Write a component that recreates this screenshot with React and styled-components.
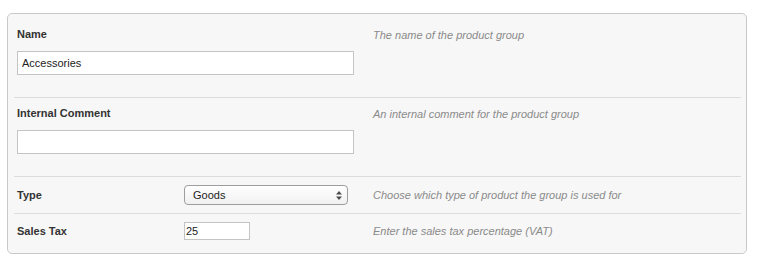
import styled, { createGlobalStyle } from "styled-components";

const GlobalStyle = createGlobalStyle`
  body {
    margin: 0;
    background: #fff;
    font-family: "Liberation Sans", Arial, Helvetica, sans-serif;
  }
`;

const fields = [
  {
    label: "Name",
    hint: "The name of the product group",
    stacked: true,
    value: "Accessories",
  },
  {
    label: "Internal Comment",
    hint: "An internal comment for the product group",
    stacked: true,
    value: "",
  },
  {
    label: "Type",
    hint: "Choose which type of product the group is used for",
    select: ["Goods", "Services"],
  },
  {
    label: "Sales Tax",
    hint: "Enter the sales tax percentage (VAT)",
    value: "25",
    small: true,
  },
];

const App = () => {
  return (
    <>
      <GlobalStyle />
      <Panel>
        {fields.map((f) => (
          <Row key={f.label} $stacked={f.stacked}>
            {f.stacked ? (
              <Stack>
                <Label>{f.label}</Label>
                <TextInput type="text" defaultValue={f.value} />
              </Stack>
            ) : (
              <>
                <Label>{f.label}</Label>
                <Control>
                  {f.select ? (
                    <SelectWrap>
                      <Select defaultValue={f.select[0]}>
                        {f.select.map((o) => (
                          <option key={o}>{o}</option>
                        ))}
                      </Select>
                      <Arrows width="6" height="9" viewBox="0 0 6 9">
                        <path d="M3 0 L6 3.5 L0 3.5 Z" fill="#4a4a4a" />
                        <path d="M3 9 L6 5.5 L0 5.5 Z" fill="#4a4a4a" />
                      </Arrows>
                    </SelectWrap>
                  ) : (
                    <TextInput type="text" defaultValue={f.value} $small={f.small} />
                  )}
                </Control>
              </>
            )}
            <Hint $stacked={f.stacked}>{f.hint}</Hint>
          </Row>
        ))}
      </Panel>
    </>
  );
};
export default App;

const Panel = styled.div`
  box-sizing: border-box;
  width: 740px;
  margin: 13px 0 0 7px;
  padding: 5px 5px 5px 6px;
  background: #f7f7f7;
  border: 1px solid #c9c9c9;
  border-radius: 5px;
`;

const Row = styled.div`
  display: grid;
  grid-template-columns: 167px 170px 1fr;
  align-items: ${(p) => (p.$stacked ? "start" : "center")};
  padding: ${(p) => (p.$stacked ? "8px 3px 22px" : "8px 3px")};
  border-bottom: 1px solid #dddddd;

  &:first-child {
    padding-top: 8px;
  }

  &:last-child {
    border-bottom: none;
  }
`;

const Stack = styled.div`
  grid-column: 1 / 3;
  display: flex;
  flex-direction: column;
  gap: 10px;
`;

const Label = styled.div`
  font-size: 11px;
  line-height: 14px;
  font-weight: bold;
  color: #333;
`;

const Control = styled.div`
  display: flex;
  align-items: center;
`;

const Hint = styled.div`
  padding-left: 19px;
  padding-top: ${(p) => (p.$stacked ? "1px" : "0")};
  font-size: 11px;
  line-height: 14px;
  font-style: italic;
  color: #8a8a8a;
`;

const TextInput = styled.input`
  box-sizing: border-box;
  width: ${(p) => (p.$small ? "66px" : "337px")};
  height: ${(p) => (p.$small ? "18px" : "24px")};
  margin: 0;
  padding: 0 4px;
  padding-left: ${(p) => (p.$small ? "1px" : "4px")};
  border: 1px solid #c4c4c4;
  border-radius: 0;
  background: #fff;
  font-family: "Liberation Sans", Arial, sans-serif;
  font-size: 11px;
  color: #222;
  outline: none;
`;

const SelectWrap = styled.div`
  position: relative;
  width: 164px;
`;

const Select = styled.select`
  appearance: none;
  -webkit-appearance: none;
  box-sizing: border-box;
  width: 100%;
  height: 20px;
  margin: 0;
  padding: 0 16px 0 8px;
  border: 1px solid #9e9e9e;
  border-radius: 4px;
  background: linear-gradient(#ffffff, #f1f1f1);
  font-family: "Liberation Sans", Arial, sans-serif;
  font-size: 11px;
  color: #222;
  outline: none;
`;

const Arrows = styled.svg`
  position: absolute;
  right: 6px;
  top: 6px;
  pointer-events: none;
`;
